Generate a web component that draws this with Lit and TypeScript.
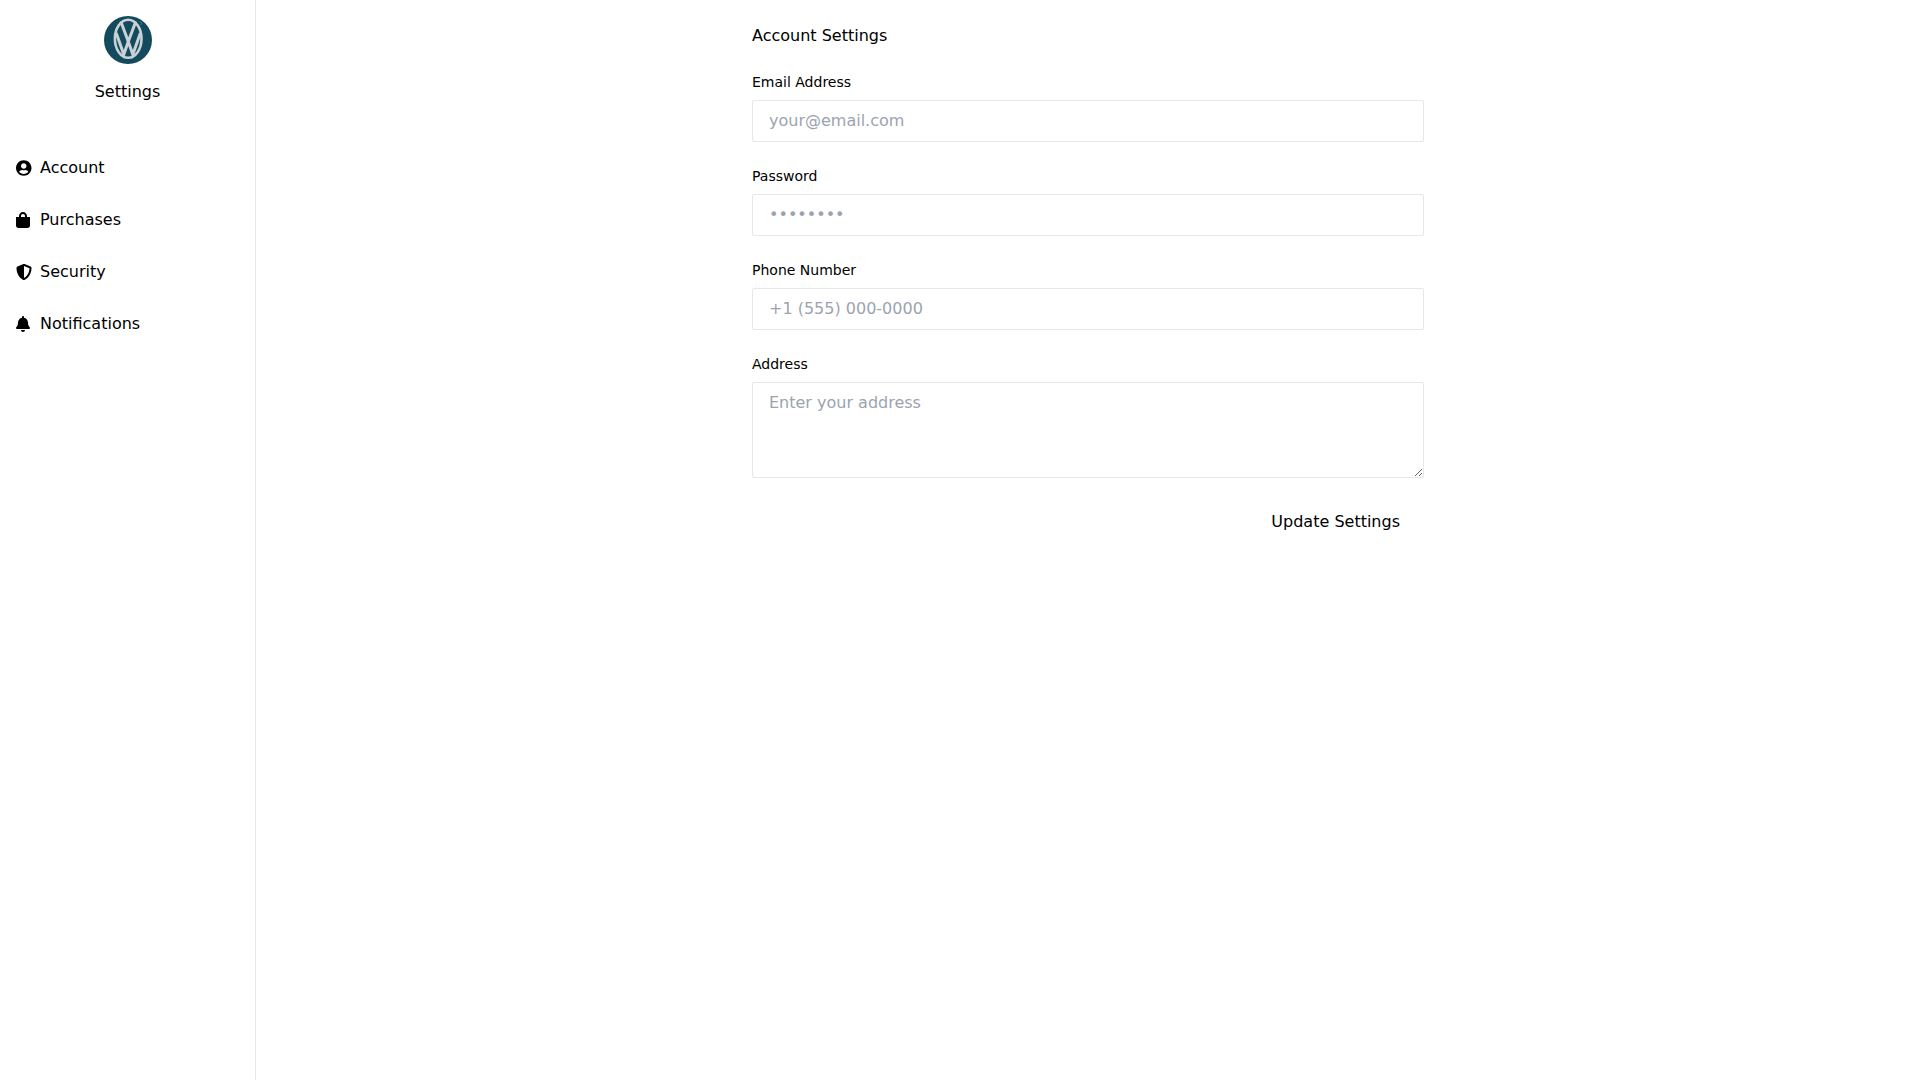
import { LitElement, html, css, svg } from "lit";
import { customElement } from "lit/decorators.js";

@customElement("app-root")
export class AppRoot extends LitElement {
  static styles = css`
    :host { display: flex; height: 1080px; font-family: "DejaVu Sans", sans-serif; color: #000; background: #fff; font-size: 16px; line-height: 24px; }
    * { box-sizing: border-box; }
    .side { width: 256px; flex: none; border-right: 1px solid #e5e7eb; display: flex; flex-direction: column; }
    .brand { display: flex; flex-direction: column; align-items: center; padding-top: 16px; gap: 16px; }
    .brand svg { width: 48px; height: 48px; display: block; }
    nav { display: flex; flex-direction: column; margin-top: 38px; }
    .item { display: flex; align-items: center; gap: 8px; padding: 14px 16px; height: 52px; }
    .ico { width: 16px; height: 16px; flex: none; display: flex; }
    .ico svg { height: 16px; display: block; fill: #000; }
    main { flex: 1; display: flex; justify-content: center; padding-top: 24px; }
    form { width: 672px; display: flex; flex-direction: column; }
    h1 { font-size: 16px; font-weight: 400; line-height: 24px; margin: 0 0 24px; }
    .field { display: flex; flex-direction: column; gap: 8px; margin-bottom: 24px; }
    label { font-size: 14px; line-height: 20px; }
    input, textarea { font-family: "DejaVu Sans", sans-serif; font-size: 16px; border: 1px solid #e5e7eb; border-radius: 2px; padding: 7px 16px 9px; width: 100%; height: 42px; color: #000; outline: none; display: block; }
    textarea { height: 96px; line-height: 24px; padding: 8px 16px; }
    ::placeholder { color: #9ca3af; opacity: 1; }
    .actions { display: flex; justify-content: flex-end; }
    button { font-family: "DejaVu Sans", sans-serif; font-size: 16px; line-height: 24px; background: none; border: 0; padding: 8px 24px; height: 40px; color: #000; }
  `;

  logo() {
    return svg`<svg viewBox="0 0 48 48">
      <circle cx="24" cy="24" r="24" fill="#134a5e"/>
      <ellipse cx="24.200" cy="22.800" rx="13.300" ry="19" fill="none" stroke="#c8d1d5" stroke-width="2.600"/>
      <path d="M12.200 17 L19.800 38.500 L24.300 25.500 L28.800 38.500 L36.400 17" fill="none" stroke="#c8d1d5" stroke-width="3"/>
      <path d="M16.800 5.500 L24.300 25.500 L31.800 5.500" fill="none" stroke="#c8d1d5" stroke-width="3"/>
      <path d="M36 5.500 C38 6 38 8 36.500 9" fill="none" stroke="#7f99a5" stroke-width="0.600"/>
    </svg>`;
  }

  render() {
    const items: [string, string, string][] = [
      ["Account", "0 0 496 512", "M248 8C111 8 0 119 0 256s111 248 248 248 248-111 248-248S385 8 248 8zm0 96c48.600 0 88 39.400 88 88s-39.400 88-88 88-88-39.400-88-88 39.400-88 88-88zm0 344c-58.700 0-111.300-26.600-146.500-68.200 18.800-35.400 55.600-59.800 98.500-59.800 2.400 0 4.800.4 7.100 1.100 13 4.200 26.600 6.900 40.900 6.900 14.300 0 28-2.700 40.900-6.900 2.300-.7 4.700-1.100 7.100-1.100 42.900 0 79.700 24.400 98.500 59.800C359.300 421.400 306.700 448 248 448z"],
      ["Purchases", "0 0 448 512", "M352 160v-32C352 57.420 294.579 0 224 0 153.420 0 96 57.420 96 128v32H0v272c0 44.183 35.817 80 80 80h288c44.183 0 80-35.817 80-80V160h-96zm-192-32c0-35.290 28.710-64 64-64s64 28.710 64 64v32H160v-32z"],
      ["Security", "0 0 512 512", "M466.500 83.700l-192-80a48.150 48.150 0 0 0-36.900 0l-192 80C27.700 91.100 16 108.600 16 128c0 198.500 114.500 335.700 221.500 380.300 11.800 4.900 25.100 4.900 36.900 0C360.100 472.600 496 349.300 496 128c0-19.400-11.700-36.900-29.500-44.300zM256.100 446.300l-.1-381 175.900 73.300c-3.300 151.400-82.100 261.100-175.800 307.700z"],
      ["Notifications", "0 0 448 512", "M224 512c35.320 0 63.970-28.650 63.970-64H160.030c0 35.350 28.650 64 63.970 64zm215.390-149.710c-19.320-20.760-55.470-51.990-55.470-154.290 0-77.700-54.480-139.900-127.940-155.160V32c0-17.670-14.320-32-31.980-32s-31.980 14.330-31.980 32v20.840C118.560 68.100 64.080 130.300 64.080 208c0 102.300-36.150 133.530-55.470 154.290-6 6.450-8.660 14.160-8.610 21.710.11 16.400 12.980 32 32.100 32h383.800c19.120 0 32-15.600 32.100-32 .05-7.550-2.610-15.270-8.610-21.710z"],
    ];
    return html`
      <aside class="side">
        <div class="brand">${this.logo()}<span>Settings</span></div>
        <nav>
          ${items.map(([t, vb, d]) => html`<div class="item"><span class="ico"><svg viewBox="${vb}"><path fill-rule="evenodd" d="${d}"/></svg></span><span>${t}</span></div>`)}
        </nav>
      </aside>
      <main>
        <form>
          <h1>Account Settings</h1>
          <div class="field"><label>Email Address</label><input type="email" placeholder="your@email.com" /></div>
          <div class="field"><label>Password</label><input type="password" placeholder="••••••••" /></div>
          <div class="field"><label>Phone Number</label><input type="tel" placeholder="+1 (555) 000-0000" /></div>
          <div class="field"><label>Address</label><textarea placeholder="Enter your address"></textarea></div>
          <div class="actions"><button type="button">Update Settings</button></div>
        </form>
      </main>
    `;
  }
}
